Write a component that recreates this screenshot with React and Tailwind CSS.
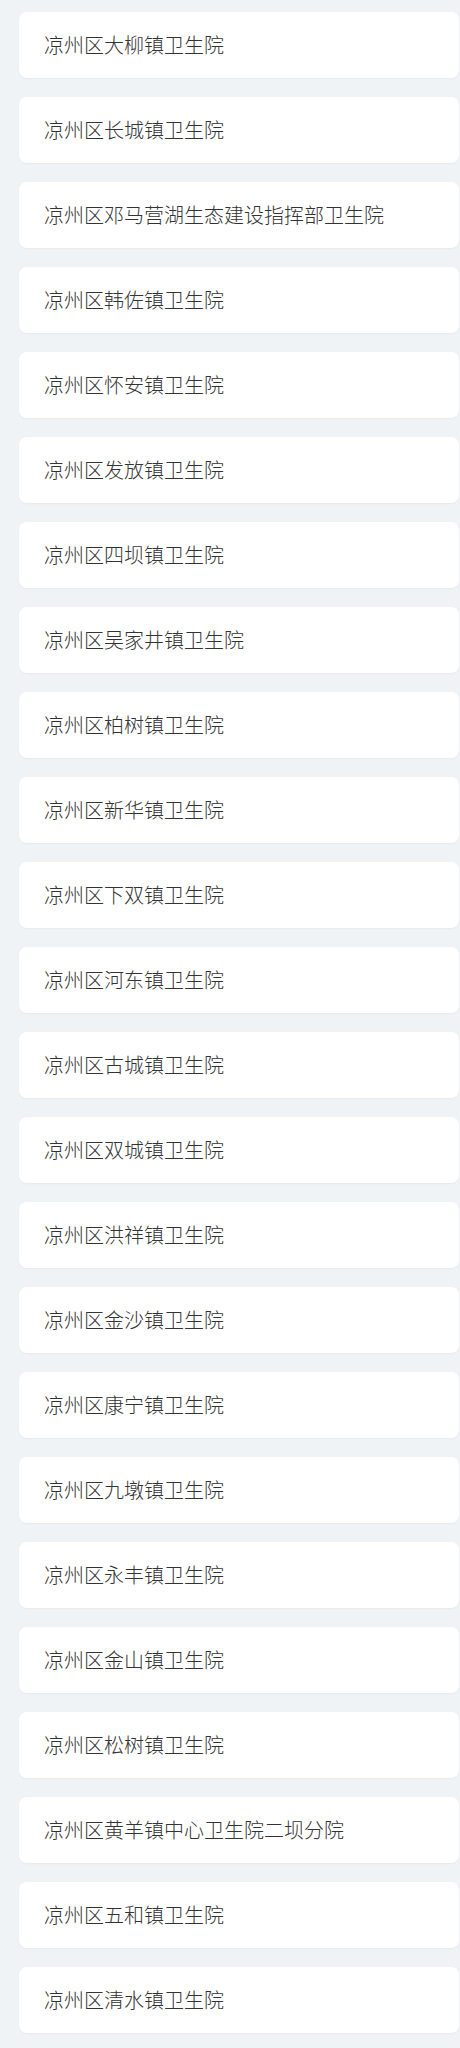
import React from "react";

const hospitals = [
  "凉州区大柳镇卫生院",
  "凉州区长城镇卫生院",
  "凉州区邓马营湖生态建设指挥部卫生院",
  "凉州区韩佐镇卫生院",
  "凉州区怀安镇卫生院",
  "凉州区发放镇卫生院",
  "凉州区四坝镇卫生院",
  "凉州区吴家井镇卫生院",
  "凉州区柏树镇卫生院",
  "凉州区新华镇卫生院",
  "凉州区下双镇卫生院",
  "凉州区河东镇卫生院",
  "凉州区古城镇卫生院",
  "凉州区双城镇卫生院",
  "凉州区洪祥镇卫生院",
  "凉州区金沙镇卫生院",
  "凉州区康宁镇卫生院",
  "凉州区九墩镇卫生院",
  "凉州区永丰镇卫生院",
  "凉州区金山镇卫生院",
  "凉州区松树镇卫生院",
  "凉州区黄羊镇中心卫生院二坝分院",
  "凉州区五和镇卫生院",
  "凉州区清水镇卫生院",
];

const App = () => {
  return (
    <div className="min-h-screen bg-[#eff3f6] pt-[12px] pb-[12px] pl-[19px] pr-px font-['Noto_Sans_CJK_SC','Noto_Sans',sans-serif]">
      <div className="flex flex-col gap-[19px]">
        {hospitals.map((name) => (
          <div
            key={name}
            className="h-[66px] flex items-center pl-[25px] bg-white rounded-[8px] shadow-[0_1px_2px_rgba(0,0,0,0.04)] text-[20px] font-light text-[#333333]"
          >
            {name}
          </div>
        ))}
      </div>
    </div>
  );
};

export default App;
